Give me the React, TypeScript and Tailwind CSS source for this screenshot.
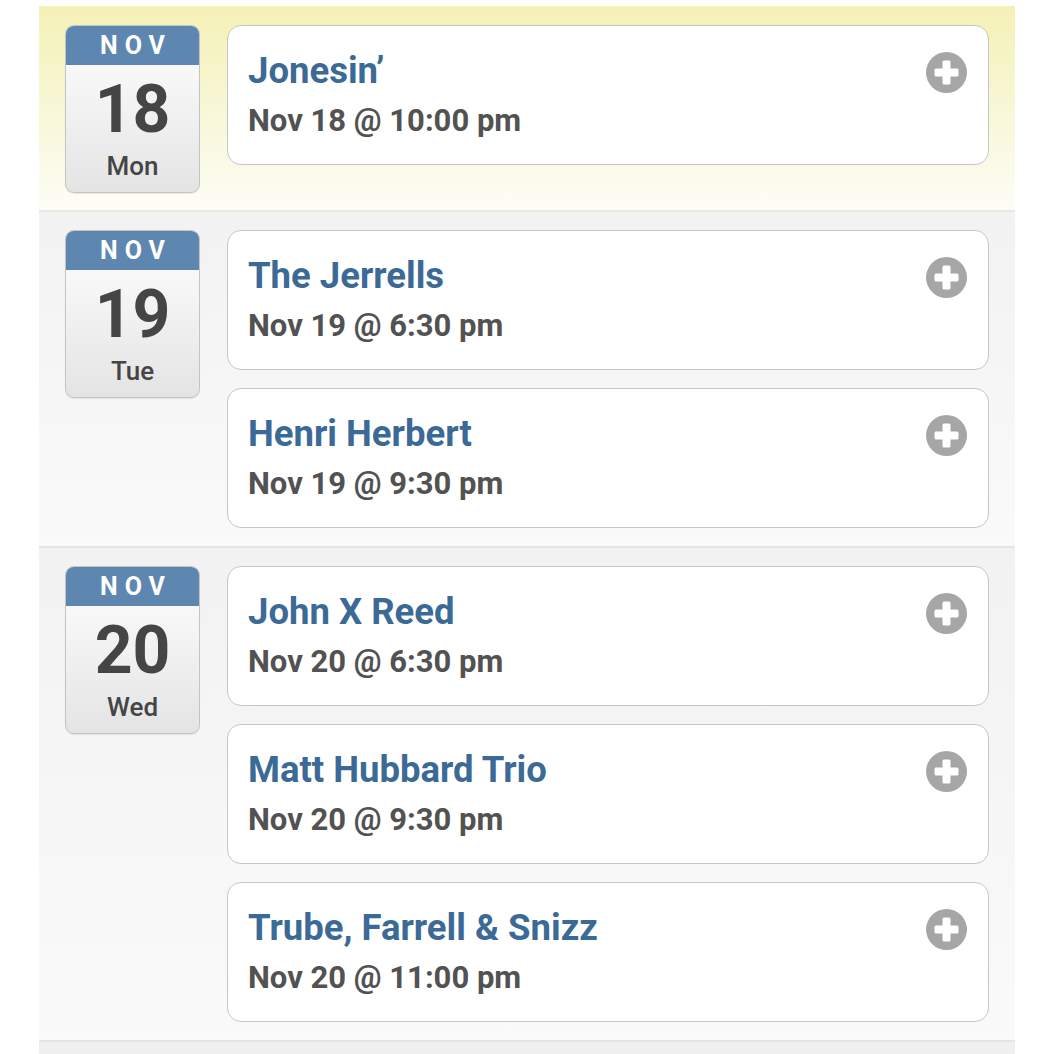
const days = [
  {
    month: "NOV",
    date: "18",
    weekday: "Mon",
    highlight: true,
    events: [{ title: "Jonesin’", time: "Nov 18 @ 10:00 pm" }],
  },
  {
    month: "NOV",
    date: "19",
    weekday: "Tue",
    highlight: false,
    events: [
      { title: "The Jerrells", time: "Nov 19 @ 6:30 pm" },
      { title: "Henri Herbert", time: "Nov 19 @ 9:30 pm" },
    ],
  },
  {
    month: "NOV",
    date: "20",
    weekday: "Wed",
    highlight: false,
    events: [
      { title: "John X Reed", time: "Nov 20 @ 6:30 pm" },
      { title: "Matt Hubbard Trio", time: "Nov 20 @ 9:30 pm" },
      { title: "Trube, Farrell & Snizz", time: "Nov 20 @ 11:00 pm" },
    ],
  },
];

const PlusIcon = () => (
  <svg width="41" height="41" viewBox="0 0 41 41">
    <circle cx="20.5" cy="20.5" r="20.5" fill="#a6a6a6" />
    <rect x="16.5" y="8.5" width="8" height="24" rx="1.5" fill="#fff" />
    <rect x="8.5" y="16.5" width="24" height="8" rx="1.5" fill="#fff" />
  </svg>
);

const DateBadge = ({ month, date, weekday }: { month: string; date: string; weekday: string }) => (
  <div className="w-[135px] h-[168px] shrink-0 rounded-[9px] border border-[#c4c4c4] bg-gradient-to-b from-white to-[#e4e4e4] overflow-hidden shadow-[0_1px_1px_rgba(0,0,0,0.08)]">
    <div className="h-[39px] bg-[#5d87b0] flex items-center justify-center text-white text-[25px] font-bold tracking-[7px] pl-[7px] leading-none">
      {month}
    </div>
    <div className="flex flex-col items-center text-[#454545]">
      <div className="mt-[12px] text-[66px] font-bold leading-none">{date}</div>
      <div className="mt-[10px] text-[26px] font-medium leading-none">{weekday}</div>
    </div>
  </div>
);

const EventCard = ({ title, time }: { title: string; time: string }) => (
  <div className="relative h-[140px] rounded-[14px] border-[1.5px] border-[#c6c6c6] bg-white pl-[20px] pt-[24px]">
    <div className="text-[36.5px] font-bold leading-[41px] text-[#3c6a96]">{title}</div>
    <div className="mt-[12px] text-[31px] font-bold leading-[35px] text-[#525252]">{time}</div>
    <div className="absolute right-[21px] top-[26px]">
      <PlusIcon />
    </div>
  </div>
);

export default function App() {
  return (
    <div className="min-h-[1054px] bg-white pt-[6px] px-[39px] font-['Roboto','Liberation_Sans',sans-serif]">
      {days.map((day) => (
        <div
          key={day.date}
          className={
            day.highlight
              ? "flex gap-[27px] pl-[26px] pr-[26px] pt-[19px] pb-[17px] border-b-2 border-[#e7e7e4] bg-gradient-to-b from-[#f4f1b6] via-[#f8f7d6] to-[#fdfdf6]"
              : "flex gap-[27px] pl-[26px] pr-[26px] pt-[18px] pb-[18px] border-b-2 border-[#e5e5e5] bg-gradient-to-b from-[#f2f2f2] to-[#fafafa]"
          }
        >
          <DateBadge month={day.month} date={day.date} weekday={day.weekday} />
          <div className="flex-1 flex flex-col gap-[18px]">
            {day.events.map((ev) => (
              <EventCard key={ev.title} title={ev.title} time={ev.time} />
            ))}
          </div>
        </div>
      ))}
      <div className="h-[20px] bg-[#f0f0f0]" />
    </div>
  );
}
